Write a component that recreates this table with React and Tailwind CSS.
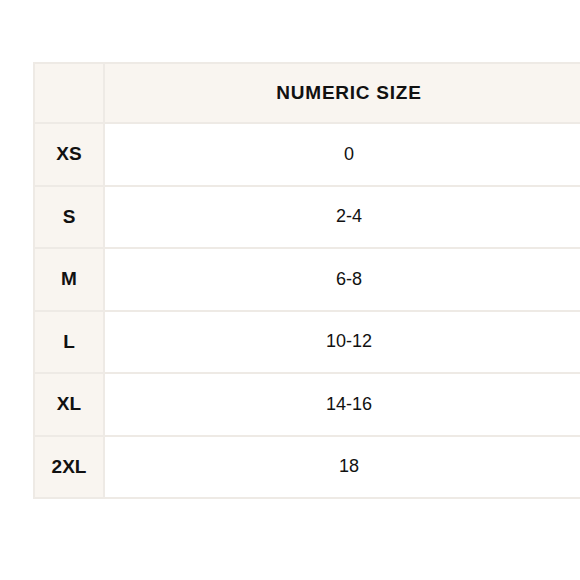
const rows = [
  { label: "XS", value: "0" },
  { label: "S", value: "2-4" },
  { label: "M", value: "6-8" },
  { label: "L", value: "10-12" },
  { label: "XL", value: "14-16" },
  { label: "2XL", value: "18" },
];

export default function App() {
  return (
    <div className="w-[580px] h-[580px] overflow-hidden bg-white pt-[62px] pl-[33px] font-['Liberation_Sans',Arial,sans-serif] text-[18px] text-[#111]">
      <div className="w-[560px] border-l-2 border-t-2 border-[#eeeae5]">
        {/* header */}
        <div className="flex h-[60px] border-b-2 border-[#eeeae5] bg-[#f9f5f0]">
          <div className="w-[70px] border-r-2 border-[#eeeae5]" />
          <div className="flex-1 flex items-center justify-center text-[19px] font-bold tracking-[0.04em]">
            NUMERIC SIZE
          </div>
        </div>

        {rows.map((r) => (
          <div key={r.label} className="flex h-[62.5px] border-b-2 border-[#eeeae5]">
            <div className="w-[70px] flex items-center justify-center border-r-2 border-[#eeeae5] bg-[#f9f5f0] text-[19px] font-bold">
              {r.label}
            </div>
            <div className="flex-1 flex items-center justify-center bg-white">{r.value}</div>
          </div>
        ))}
      </div>
    </div>
  );
}
